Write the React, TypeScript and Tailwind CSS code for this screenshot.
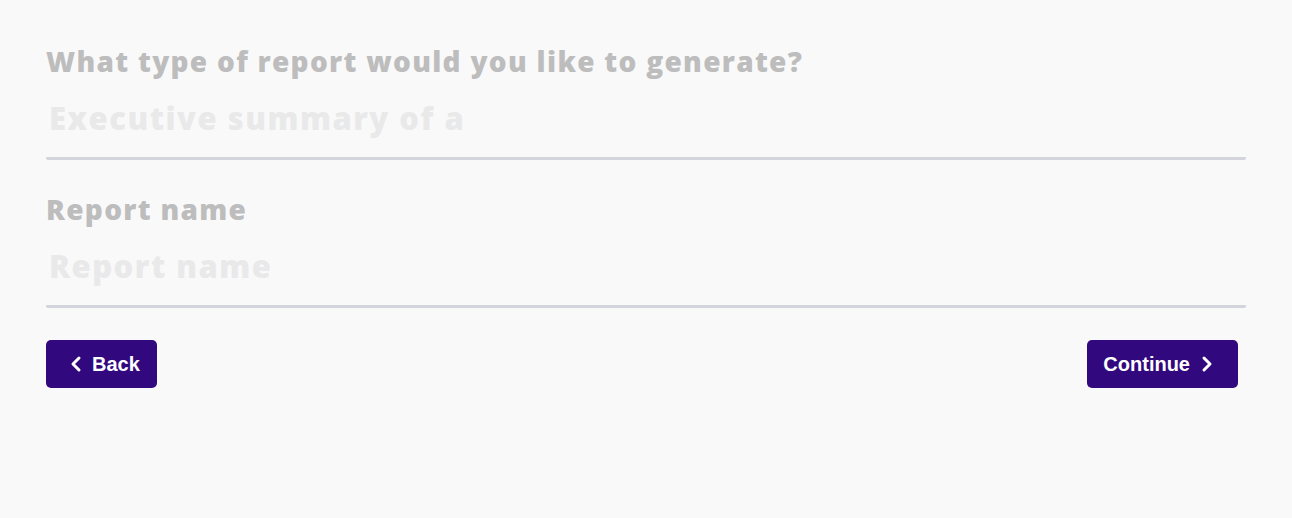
import { ChevronLeft, ChevronRight } from 'lucide-react';

const font = { fontFamily: '"Open Sans", "Liberation Sans", sans-serif' };

function Field({ label, placeholder }: { label: string; placeholder: string }) {
  return (
    <div className="flex flex-col">
      <label className="text-[28px] leading-[40px] font-extrabold tracking-[1.3px] text-[#bdbdbd]">{label}</label>
      <input
        placeholder={placeholder}
        className="mt-[13px] h-[66px] pb-[16px] bg-transparent px-[3px] text-[31px] font-extrabold tracking-[1.5px] outline-none placeholder:text-[#e9e9ea] border-b-[3px] border-[#d4d4dc] rounded-[2px]"
      />
    </div>
  );
}

export default function App() {
  return (
    <div className="min-h-screen bg-[#f9f9fa] px-[46px] pt-[41px]" style={font}>
      <div className="w-[1200px] flex flex-col gap-[29px]">
        <Field label="What type of report would you like to generate?" placeholder="Executive summary of a" />
        <Field label="Report name" placeholder="Report name" />
      </div>
      <div className="w-[1192px] mt-[32px] flex justify-between font-['Liberation_Sans',sans-serif]">
        <button className="h-[48px] pl-[18px] pr-[17px] rounded-[5px] bg-[#32087e] text-white text-[20px] font-bold flex items-center gap-[4px]">
          <ChevronLeft size={24} strokeWidth={3} />
          Back
        </button>
        <button className="h-[48px] pl-[16px] pr-[19px] rounded-[5px] bg-[#32087e] text-white text-[20px] font-bold flex items-center gap-[5px]">
          Continue
          <ChevronRight size={24} strokeWidth={3} />
        </button>
      </div>
    </div>
  );
}
